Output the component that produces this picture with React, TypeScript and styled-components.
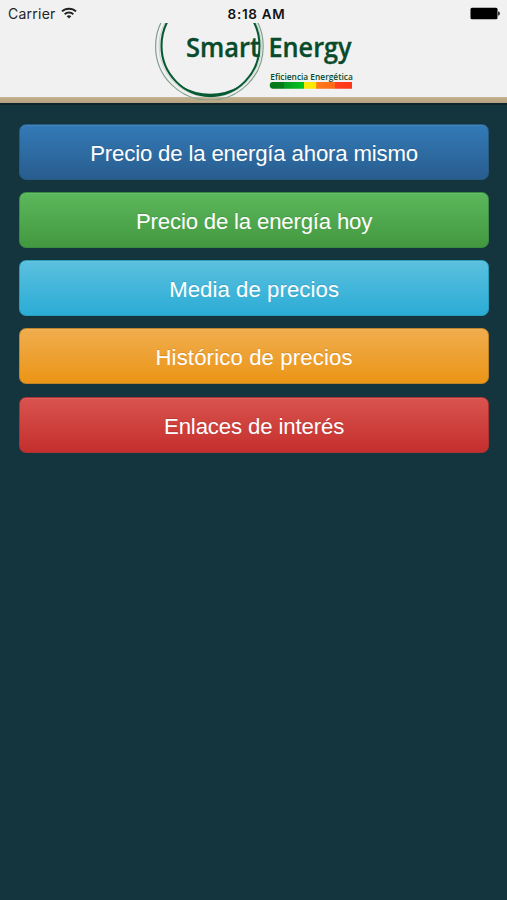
import React from "react";
import styled, { createGlobalStyle } from "styled-components";

const GlobalStyle = createGlobalStyle`
  * { box-sizing: border-box; }
  body {
    margin: 0;
    background: #14343e;
    font-family: "Liberation Sans", Arial, sans-serif;
  }
`;

const Screen = styled.div`
  display: flex;
  flex-direction: column;
  height: 900px;
  background: #14343e;
`;

const Header = styled.header`
  height: 105px;
  background: linear-gradient(#f1f1f1 97px, #c8b799 97px, #bda986 99px, #bda986 102px, #a49b80 103px);
  border-bottom: 2px solid #10262c;
`;

const StatusBar = styled.div`
  display: grid;
  grid-template-columns: 1fr auto 1fr;
  align-items: center;
  height: 23px;
  padding: 4px 7px 0 8px;
  font-family: Inter, sans-serif;
  font-size: 14px;
  line-height: 18px;
  color: #242424;
`;

const Carrier = styled.div`
  display: flex;
  align-items: center;
  gap: 5px;
  letter-spacing: 0.25px;
`;

const WifiSymbol = styled.svg`
  margin-bottom: 2px;
`;

const Clock = styled.time`
  padding-left: 5px;
  font-size: 13.5px;
  font-weight: 600;
  letter-spacing: 0.7px;
  color: #111;
`;

const BatteryIcon = styled.svg`
  justify-self: end;
`;

const Logo = styled.svg`
  display: block;
  margin-left: 150px;
`;

const Menu = styled.nav`
  display: flex;
  flex-direction: column;
  gap: 12.3px;
  padding: 18.5px 18px 0 19.2px;
`;

const MenuButton = styled.button<{ $from: string; $to: string; $edge: string; $track: number }>`
  height: 56px;
  padding: 4px 0 0;
  border: 1px solid ${(p) => p.$edge};
  border-radius: 7px;
  background: linear-gradient(${(p) => p.$from}, ${(p) => p.$to});
  box-shadow: inset 0 1px 0 rgba(255, 255, 255, 0.08);
  color: #fff;
  font-family: "Liberation Sans", Arial, sans-serif;
  font-size: 22.2px;
  line-height: 30px;
  letter-spacing: ${(p) => p.$track}px;
  text-shadow: 0 -1px 0 rgba(0, 0, 0, 0.12);
`;

const items = [
  { label: "Precio de la energía ahora mismo", from: "#337ab7", to: "#285d8e", edge: "#265a83", track: -0.16 },
  { label: "Precio de la energía hoy", from: "#5cb85c", to: "#43983f", edge: "#398c43", track: -0.18 },
  { label: "Media de precios", from: "#5bc0de", to: "#2bacd6", edge: "#2b9dbc", track: 0.06 },
  { label: "Histórico de precios", from: "#f0ad4e", to: "#eb9516", edge: "#bd8429", track: 0.12 },
  { label: "Enlaces de interés", from: "#d9534f", to: "#c42f2c", edge: "#a83234", track: -0.13 },
];

function WifiIcon() {
  return (
    <WifiSymbol width="16" height="12" viewBox="0 0 16 12" fill="none" stroke="#222" strokeWidth="2">
      <path d="M1 4.4C4.8.7 11.2.7 15 4.4" />
      <path d="M3.7 7.2C6.1 4.9 9.9 4.9 12.3 7.2" />
      <path d="M5.7 9.2Q8 7.2 10.3 9.2L8 11.6Z" fill="#222" stroke="none" />
    </WifiSymbol>
  );
}

function SmartEnergyLogo() {
  return (
    <Logo width="210" height="77" viewBox="150 23 210 77" role="img" aria-label="Smart Energy">
      <defs>
        <linearGradient id="rating">
          <stop offset="0" stopColor="#08751d" />
          <stop offset=".17" stopColor="#087f19" />
          <stop offset=".18" stopColor="#079923" />
          <stop offset=".41" stopColor="#05c51f" />
          <stop offset=".42" stopColor="#f6e90b" />
          <stop offset=".56" stopColor="#ffe400" />
          <stop offset=".57" stopColor="#ff7b18" />
          <stop offset=".79" stopColor="#ff6819" />
          <stop offset=".8" stopColor="#ff3f1d" />
          <stop offset="1" stopColor="#ff351a" />
        </linearGradient>
      </defs>
      <circle cx="209.4" cy="46.4" r="53.8" fill="none" stroke="#83a08f" strokeWidth="1.2" />
      <circle cx="210.3" cy="46" r="51.3" fill="none" stroke="#c3d0c8" strokeWidth="0.9" />
      <ellipse cx="210.5" cy="45.8" rx="49" ry="50.3" fill="none" stroke="#075a33" strokeWidth="2.1" />
      <path d="M180 85.4Q210 108 241 85.4Q210 102 180 85.4Z" fill="#075a33" />
      <g fill="#074b2c" fontFamily="'Open Sans', sans-serif" fontWeight="600">
        <g stroke="#074b2c" strokeWidth="0.35">
          <text x="186" y="56.7" fontSize="26.5" textLength="74" lengthAdjust="spacingAndGlyphs">Smart</text>
          <text x="268.5" y="56.7" fontSize="26.5" textLength="83" lengthAdjust="spacingAndGlyphs">Energy</text>
        </g>
        <text x="270.3" y="79.6" fontSize="9" textLength="82.5" lengthAdjust="spacingAndGlyphs">Eficiencia Energética</text>
      </g>
      <path d="M273 82H352V88.7H273Q269.8 88.7 269.8 85.3Q269.8 82 273 82Z" fill="url(#rating)" />
    </Logo>
  );
}

export default function App() {
  return (
    <Screen>
      <GlobalStyle />
      <Header>
        <StatusBar>
          <Carrier>
            Carrier
            <WifiIcon />
          </Carrier>
          <Clock>8:18 AM</Clock>
          <BatteryIcon width="30" height="13" viewBox="0 0 30 13">
            <rect x=".5" y=".7" width="27" height="11.6" rx="1.5" fill="#000" />
            <path d="M28 4.3Q30 4.8 30 6.5T28 8.7Z" fill="#333" />
          </BatteryIcon>
        </StatusBar>
        <SmartEnergyLogo />
      </Header>
      <Menu>
        {items.map((item) => (
          <MenuButton key={item.label} $from={item.from} $to={item.to} $edge={item.edge} $track={item.track}>
            {item.label}
          </MenuButton>
        ))}
      </Menu>
    </Screen>
  );
}
